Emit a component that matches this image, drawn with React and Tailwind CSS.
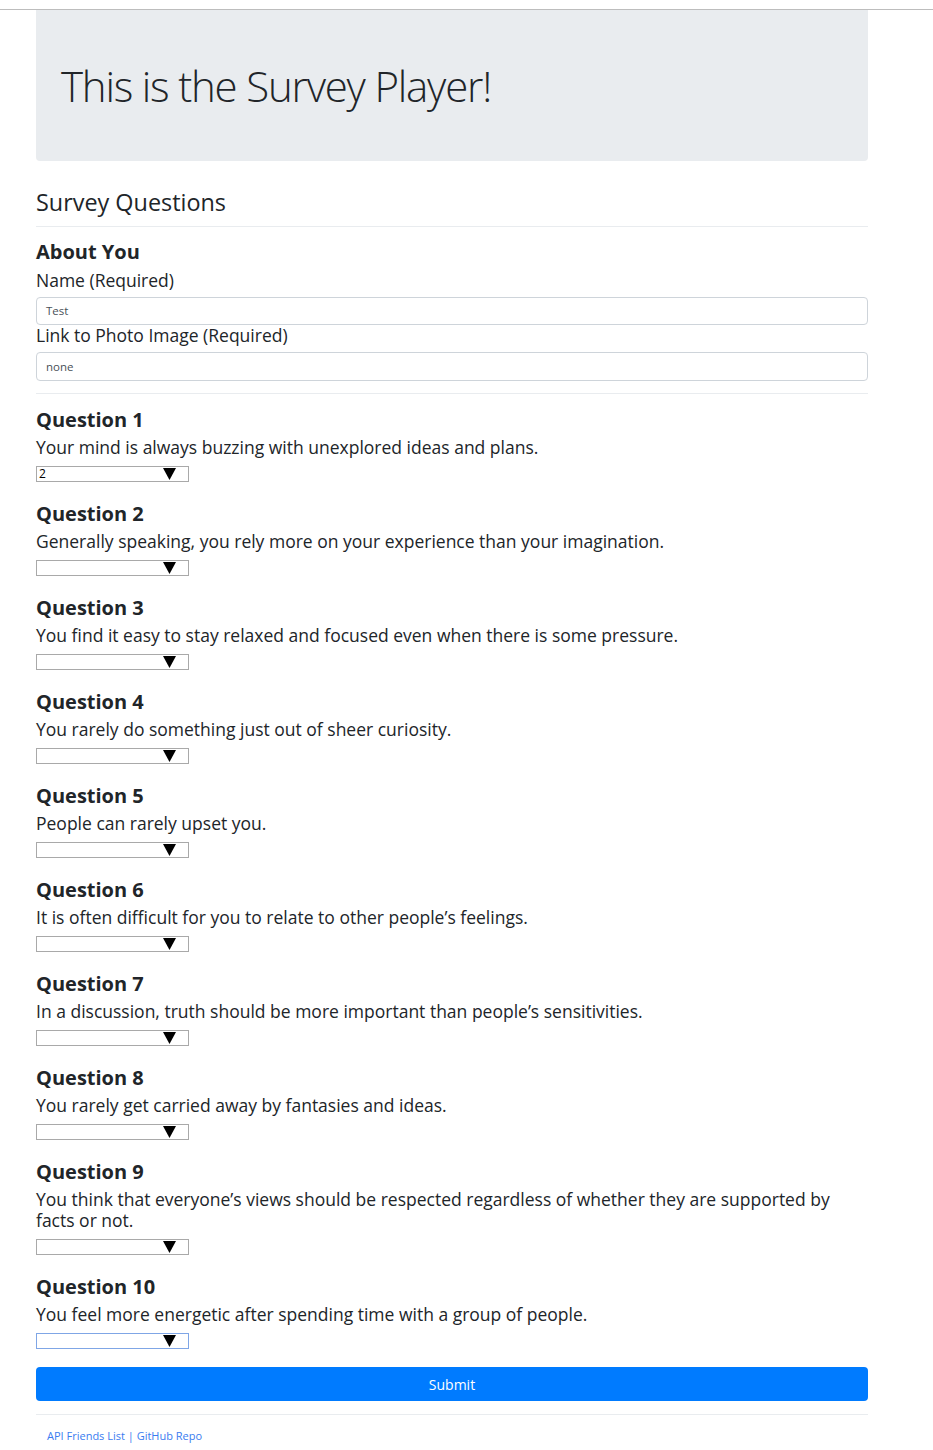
import React from "react";

const QUESTIONS = [
  { text: "Your mind is always buzzing with unexplored ideas and plans.", value: "2" },
  { text: "Generally speaking, you rely more on your experience than your imagination." },
  { text: "You find it easy to stay relaxed and focused even when there is some pressure." },
  { text: "You rarely do something just out of sheer curiosity." },
  { text: "People can rarely upset you." },
  { text: "It is often difficult for you to relate to other people’s feelings." },
  { text: "In a discussion, truth should be more important than people’s sensitivities." },
  { text: "You rarely get carried away by fantasies and ideas." },
  { text: "You think that everyone’s views should be respected regardless of whether they are supported by facts or not." },
  { text: "You feel more energetic after spending time with a group of people.", focused: true },
];

const FakeSelect = ({ value, focused }) => (
  <div
    className={`mt-[8px] flex h-[16px] w-[153px] items-center justify-between border ${
      focused ? "border-[#7fa6e6]" : "border-[#a9a9a9]"
    } bg-white pl-[2px] pr-[12px]`}
  >
    <span className="text-[12px] leading-none text-black">{value || ""}</span>
    <svg width="13" height="12" viewBox="0 0 13 12">
      <polygon points="0,0 13,0 6.5,12" fill="#000" />
    </svg>
  </div>
);

const Question = ({ n, text, value, focused }) => (
  <div className="mb-[20px]">
    {/* heading */}
    <h4 className="text-[20px] font-bold leading-[24px]">Question {n}</h4>
    <p className="mt-[5px] text-[17.5px] leading-[21px]">{text}</p>
    <FakeSelect value={value} focused={focused} />
  </div>
);

const App = () => {
  return (
    <div className="min-h-[1450px] bg-white text-[#212529] font-['Open_Sans',sans-serif]">
      <div className="h-[10px] border-b border-[#bdbdbd]" />

      <div className="ml-[36px] w-[832px]">
        {/* Jumbotron */}
        <div className="flex h-[151px] items-center rounded-b-[4px] bg-[#e9ecef] px-[25px]">
          <h1 className="text-[42px] font-light leading-none tracking-[-1.2px] text-[#212529]">
            This is the Survey Player!
          </h1>
        </div>

        <h2 className="mt-[26px] text-[23.4px] leading-[30px]">Survey Questions</h2>
        <hr className="mt-[9px] border-t border-[#e9ecef]" />

        {/* About You */}
        <h3 className="mt-[13px] text-[20px] font-bold leading-[24px]">About You</h3>
        <div className="mt-[5px] text-[17.5px] leading-[22px]">Name (Required)</div>
        <div className="mt-[6px] flex h-[28px] items-center rounded-[4px] border border-[#ced4da] px-[9px] text-[11.5px] text-[#495057]">
          Test
        </div>
        <div className="-mt-[1px] text-[17.5px] leading-[22px]">Link to Photo Image (Required)</div>
        <div className="mt-[6px] flex h-[29px] items-center rounded-[4px] border border-[#ced4da] px-[9px] text-[11.5px] text-[#495057]">
          none
        </div>
        <hr className="mt-[12px] border-t border-[#e9ecef]" />

        <div className="mt-[14px]">
          {QUESTIONS.map((q, i) => (
            <Question key={i} n={i + 1} {...q} />
          ))}
        </div>

        <button className="-mt-[2px] flex h-[34px] w-full items-center justify-center rounded-[4px] bg-[#007bff] text-[14px] text-white">
          Submit
        </button>
        <hr className="mt-[13px] border-t border-[#e9ecef]" />

        <div className="mt-[14px] pl-[11px] text-[11px] leading-[14px] text-[#3a7cf0]">
          <a>API Friends List</a>
          <span> | </span>
          <a>GitHub Repo</a>
        </div>
      </div>
    </div>
  );
};

export default App;
